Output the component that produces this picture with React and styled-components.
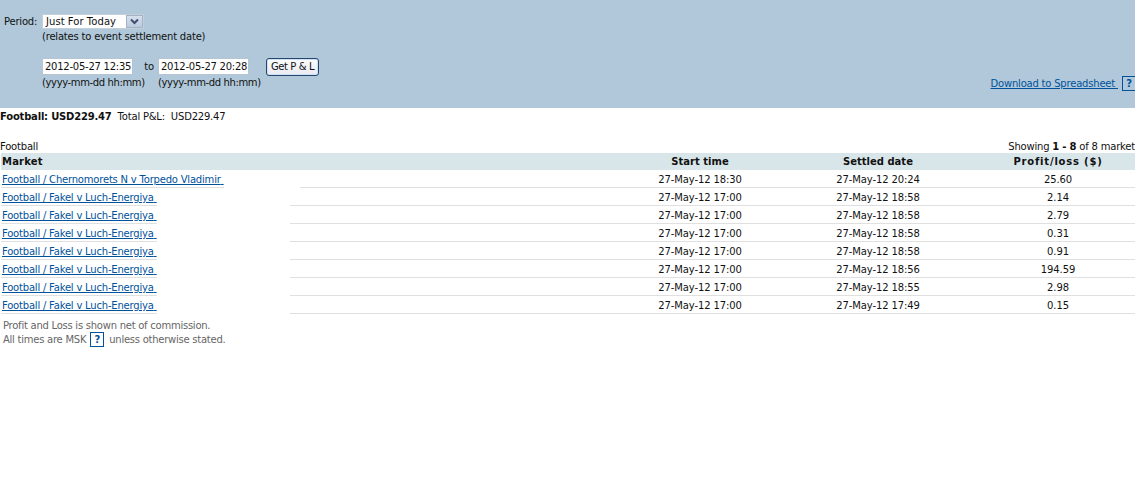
import React from 'react'
import styled, { createGlobalStyle } from 'styled-components'

const ROWS = [
  { market: 'Football / Chernomorets N v Torpedo Vladimir', start: '27-May-12 18:30', settled: '27-May-12 20:24', pl: '25.60', long: true },
  { market: 'Football / Fakel v Luch-Energiya', start: '27-May-12 17:00', settled: '27-May-12 18:58', pl: '2.14' },
  { market: 'Football / Fakel v Luch-Energiya', start: '27-May-12 17:00', settled: '27-May-12 18:58', pl: '2.79' },
  { market: 'Football / Fakel v Luch-Energiya', start: '27-May-12 17:00', settled: '27-May-12 18:58', pl: '0.31' },
  { market: 'Football / Fakel v Luch-Energiya', start: '27-May-12 17:00', settled: '27-May-12 18:58', pl: '0.91' },
  { market: 'Football / Fakel v Luch-Energiya', start: '27-May-12 17:00', settled: '27-May-12 18:56', pl: '194.59' },
  { market: 'Football / Fakel v Luch-Energiya', start: '27-May-12 17:00', settled: '27-May-12 18:55', pl: '2.98' },
  { market: 'Football / Fakel v Luch-Energiya', start: '27-May-12 17:00', settled: '27-May-12 17:49', pl: '0.15' }
]

const COLUMNS = '1fr 150px 206px 154px'

const GlobalStyle = createGlobalStyle`
  html, body {
    margin: 0;
    padding: 0;
    background: white;
    overflow: hidden;
  }
  body {
    font-family: 'DejaVu Sans', Verdana, sans-serif;
    font-size: 10px;
    line-height: 14px;
    letter-spacing: -0.2px;
    color: #111;
  }
`

const App = () => (
  <Page>
    <GlobalStyle />
    <FilterPanel>
      <FilterForm>
        <PeriodRow>
          <Label>Period:</Label>
          <Select>
            <SelectValue>Just For Today</SelectValue>
            <SelectArrow>
              <svg width='9' height='7' viewBox='0 0 9 7'>
                <path d='M1 1.5 L4.5 5 L8 1.5' fill='none' stroke='#3f4f6b' strokeWidth='2' />
              </svg>
            </SelectArrow>
          </Select>
        </PeriodRow>
        <Hint>(relates to event settlement date)</Hint>
        <DateRow>
          <DateField>
            <DateInput>2012-05-27 12:35</DateInput>
            <DateHint>(yyyy-mm-dd hh:mm)</DateHint>
          </DateField>
          <ToLabel>to</ToLabel>
          <DateField>
            <DateInput>2012-05-27 20:28</DateInput>
            <DateHint>(yyyy-mm-dd hh:mm)</DateHint>
          </DateField>
          <SubmitButton>Get P &amp; L</SubmitButton>
        </DateRow>
      </FilterForm>
      <DownloadBox>
        <DownloadLink href='#'>Download to Spreadsheet&nbsp;</DownloadLink>
        <HelpBadge>?</HelpBadge>
      </DownloadBox>
    </FilterPanel>
    <Summary>
      <strong>Football: USD229.47</strong>
      <SummaryTotal>Total P&amp;L:&nbsp; USD229.47</SummaryTotal>
    </Summary>
    <TableCaption>
      <span>Football</span>
      <span>
        Showing <strong>1 - 8</strong> of 8 market
      </span>
    </TableCaption>
    <HeadRow>
      <MarketHead>Market</MarketHead>
      <HeadCell>Start time</HeadCell>
      <HeadCell>Settled date</HeadCell>
      <HeadCell $wide>Profit/loss ($)</HeadCell>
    </HeadRow>
    {ROWS.map((row, i) => (
      <Row key={i}>
        <MarketCell>
          <MarketLink href='#'>{row.market}&nbsp;</MarketLink>
        </MarketCell>
        <RowValues $long={row.long}>
          <span />
          <Cell>{row.start}</Cell>
          <Cell>{row.settled}</Cell>
          <Cell>{row.pl}</Cell>
        </RowValues>
      </Row>
    ))}
    <Notes>
      <NoteText>Profit and Loss is shown net of commission.</NoteText>
      <NoteLine>
        All times are MSK <HelpBadge>?</HelpBadge> <NoteTail>unless otherwise stated.</NoteTail>
      </NoteLine>
    </Notes>
  </Page>
)

const Page = styled.div`
  width: 1135px;
  height: 485px;
  overflow: hidden;
`

const FilterPanel = styled.div`
  height: 108px;
  box-sizing: border-box;
  padding: 14px 0 17px 4px;
  background: #b0c8d9;
  display: flex;
  justify-content: space-between;
  align-items: flex-end;
`

const FilterForm = styled.div`
  align-self: flex-start;
  display: flex;
  flex-direction: column;
  padding-left: 38px;
`

const PeriodRow = styled.div`
  display: flex;
  align-items: center;
  margin-left: -38px;
  height: 15px;
`

const Label = styled.span`
  width: 38px;
`

const Select = styled.div`
  width: 102px;
  height: 15px;
  box-sizing: border-box;
  display: flex;
  justify-content: space-between;
  background: white;
  border: 1px solid #c3d0dc;
`

const SelectValue = styled.span`
  padding-left: 3px;
  line-height: 13px;
  letter-spacing: 0.05px;
`

const SelectArrow = styled.span`
  width: 15px;
  display: flex;
  align-items: center;
  justify-content: center;
  background: linear-gradient(#d6e0ee, #bccbe0);
  border: 1px solid #a3b2c6;
`

const Hint = styled.div`
  margin-top: 1px;
  white-space: nowrap;
`

const DateHint = styled(Hint)`
  letter-spacing: -0.37px;
`

const DateRow = styled.div`
  display: flex;
  align-items: flex-start;
  margin-top: 14px;
`

const DateField = styled.div`
  width: 91px;
  display: flex;
  flex-direction: column;
`

const DateInput = styled.div`
  height: 17px;
  box-sizing: border-box;
  padding-left: 2px;
  line-height: 15px;
  letter-spacing: -0.25px;
  white-space: nowrap;
  overflow: hidden;
  background: white;
  border: 1px solid #b4c4d2;
`

const ToLabel = styled.span`
  width: 25px;
  box-sizing: border-box;
  padding-right: 4px;
  text-align: right;
  line-height: 17px;
`

const SubmitButton = styled.button`
  width: 53px;
  height: 18px;
  margin-left: 17px;
  padding: 0;
  font: inherit;
  letter-spacing: -0.4px;
  line-height: 14px;
  color: #111;
  background: linear-gradient(#fdfdfd, #e8eaf2);
  border: 1px solid #24466f;
  border-radius: 3px;
  box-shadow: inset 0 0 0 1px #cfe0f5;
`

const DownloadBox = styled.div`
  display: flex;
  align-items: center;
  gap: 4px;
  margin-right: -1px;
`

const DownloadLink = styled.a`
  color: #00529b;
`

const HelpBadge = styled.span`
  display: inline-block;
  width: 12px;
  height: 13px;
  line-height: 13px;
  text-align: center;
  font-weight: bold;
  color: #00529b;
  border: 1px solid #00529b;
`

const Summary = styled.div`
  height: 33px;
  padding-top: 2px;
  box-sizing: border-box;
`

const SummaryTotal = styled.span`
  margin-left: 6px;
`

const TableCaption = styled.div`
  display: flex;
  justify-content: space-between;
  height: 12px;
  line-height: 12px;
`

const HeadRow = styled.div`
  height: 17px;
  margin-left: 1px;
  display: grid;
  grid-template-columns: ${COLUMNS};
  align-items: center;
  font-weight: bold;
  letter-spacing: 0;
  background: #d8e6ea;
`

const MarketHead = styled.div`
  padding-left: 1px;
  letter-spacing: 0.2px;
`

const HeadCell = styled.div`
  text-align: center;
  letter-spacing: ${({ $wide }) => ($wide ? '0.8px' : '0')};
`

const Row = styled.div`
  height: 18px;
  display: flex;
`

const MarketCell = styled.div`
  width: 290px;
  flex-shrink: 0;
  margin-left: 1px;
`

const MarketLink = styled.a`
  display: inline-block;
  height: 18px;
  box-sizing: border-box;
  padding-left: 1px;
  line-height: 19px;
  color: #00529b;
  border-bottom: 1px solid #e0e0e0;
  white-space: nowrap;
`

const RowValues = styled.div`
  flex: 1;
  margin-left: ${({ $long }) => ($long ? '9px' : '-1px')};
  padding-top: 2px;
  display: grid;
  grid-template-columns: ${COLUMNS};
  align-items: center;
  border-bottom: 1px solid #e0e0e0;
`

const Cell = styled.div`
  text-align: center;
  letter-spacing: -0.1px;
`

const Notes = styled.div`
  margin: 5px 0 0 3px;
  color: #666;
  letter-spacing: -0.25px;
`

const NoteText = styled.div`
  height: 13px;
`

const NoteLine = styled.div`
  display: flex;
  align-items: center;
  gap: 4px;
`

const NoteTail = styled.span`
  margin-left: 1px;
`

export default App
